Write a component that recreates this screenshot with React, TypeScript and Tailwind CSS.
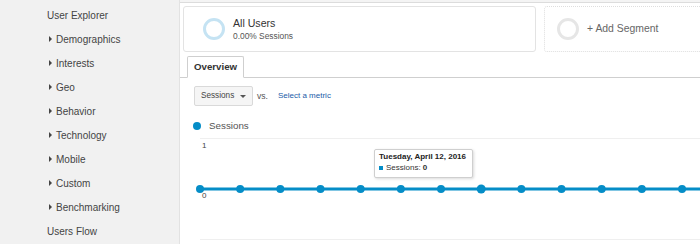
const navItems = [
  { label: "User Explorer", sub: false },
  { label: "Demographics", sub: true },
  { label: "Interests", sub: true },
  { label: "Geo", sub: true },
  { label: "Behavior", sub: true },
  { label: "Technology", sub: true },
  { label: "Mobile", sub: true },
  { label: "Custom", sub: true },
  { label: "Benchmarking", sub: true },
  { label: "Users Flow", sub: false },
];

const dots = Array.from({ length: 13 }, (_, i) => 20 + i * 40.17);

function SegmentRing({ color }: { color: string }) {
  return (
    <svg width="24" height="24" viewBox="0 0 24 24" className="shrink-0">
      <circle cx="12" cy="12" r="9.5" fill="none" stroke={color} strokeWidth="3" />
    </svg>
  );
}

export default function App() {
  return (
    <div className="flex h-[244px] w-[700px] overflow-hidden bg-white font-['Liberation_Sans',Arial,sans-serif]">
      {/* Sidebar */}
      <aside className="w-[180px] shrink-0 border-r border-[#e2e2e2] bg-[#f1f1f1] pt-[3px]">
        <ul>
          {navItems.map((item) => (
            <li
              key={item.label}
              className="flex h-[24px] items-center text-[10px] text-[#444]"
            >
              {item.sub ? (
                <span className="flex items-center pl-[49px]">
                  <span className="mr-[4px] h-0 w-0 border-y-[3px] border-l-[3px] border-y-transparent border-l-[#444]" />
                  {item.label}
                </span>
              ) : (
                <span className="pl-[47px]">{item.label}</span>
              )}
            </li>
          ))}
        </ul>
      </aside>

      {/* Main */}
      <main className="min-w-0 flex-1">
        <div className="h-[3px] border-b border-[#dcdcdc] bg-[#f4f4f4]" />

        {/* Segments */}
        <div className="mt-[3px] flex gap-[8px] pl-[3px]">
          <div className="flex h-[46px] w-[353px] shrink-0 items-center rounded-[3px] border border-[#e3e3e3] pl-[18px]">
            <SegmentRing color="#c5e3f3" />
            <div className="ml-[7px] leading-none">
              <div className="text-[10.6px] text-[#333]">All Users</div>
              <div className="mt-[3px] text-[8.4px] text-[#555]">0.00% Sessions</div>
            </div>
          </div>
          <div className="flex h-[46px] w-[200px] shrink-0 items-center rounded-[3px] border border-dotted border-[#dedede] pl-[11px]">
            <SegmentRing color="#e6e6e6" />
            <span className="ml-[7px] text-[10.4px] text-[#666]">+ Add Segment</span>
          </div>
        </div>

        {/* Tabs */}
        <div className="mt-[4px] flex border-b border-[#cfcfcf] pl-[7px]">
          <div className="-mb-px flex h-[22px] w-[57px] items-center rounded-t-[2px] border border-b-white border-[#cfcfcf] bg-white pl-[6px] text-[9.7px] font-bold text-[#333]">
            Overview
          </div>
        </div>

        {/* Metric selector */}
        <div className="mt-[8px] flex items-center pl-[14px]">
          <div className="flex h-[20px] w-[59px] items-center justify-between rounded-[2px] border border-[#d9d9d9] bg-[#f5f5f5] pl-[6px] pr-[6px] text-[8.2px] text-[#444]">
            <span>Sessions</span>
            <span className="h-0 w-0 border-x-[3px] border-t-[3px] border-x-transparent border-t-[#555]" />
          </div>
          <span className="ml-[4px] text-[8.6px] text-[#555]">vs.</span>
          <span className="ml-[10px] text-[8px] text-[#1a5ca8]">Select a metric</span>
        </div>

        {/* Legend */}
        <div className="mt-[14px] flex h-[12px] items-center pl-[13px]">
          <span className="h-[8px] w-[8px] rounded-full bg-[#058dc7]" />
          <span className="ml-[8px] text-[9.8px] text-[#555]">Sessions</span>
        </div>

        {/* Chart */}
        <div className="relative h-[112px]">
          <svg width="520" height="112" className="block">
            <line x1="20" y1="6.5" x2="520" y2="6.5" stroke="#efefef" strokeWidth="1" />
            <line x1="20" y1="107.5" x2="520" y2="107.5" stroke="#efefef" strokeWidth="1" />
            <line x1="20" y1="57" x2="520" y2="57" stroke="#058dc7" strokeWidth="3" />
            {dots.map((x, i) => (
              <circle key={i} cx={x} cy="57" r={i === 7 ? 4.5 : 4} fill="#058dc7" />
            ))}
          </svg>
          <span className="absolute left-[22px] top-[8px] text-[8px] text-[#444]">1</span>
          <span className="absolute left-[22px] top-[58px] text-[8px] text-[#444]">0</span>

          {/* Tooltip */}
          <div className="absolute left-[194px] top-[17px] h-[29px] w-[99px] rounded-[2px] border border-[#cfcfcf] bg-white pl-[4px] pt-[3px] leading-none shadow-[1px_1px_3px_rgba(0,0,0,0.15)]">
            <div className="text-[8px] font-bold text-[#222]">Tuesday, April 12, 2016</div>
            <div className="mt-[3px] flex items-center text-[8px] text-[#333]">
              <span className="mr-[3px] h-[4px] w-[4px] bg-[#058dc7]" />
              Sessions: <span className="ml-[2px] font-bold">0</span>
            </div>
          </div>
        </div>
      </main>
    </div>
  );
}
